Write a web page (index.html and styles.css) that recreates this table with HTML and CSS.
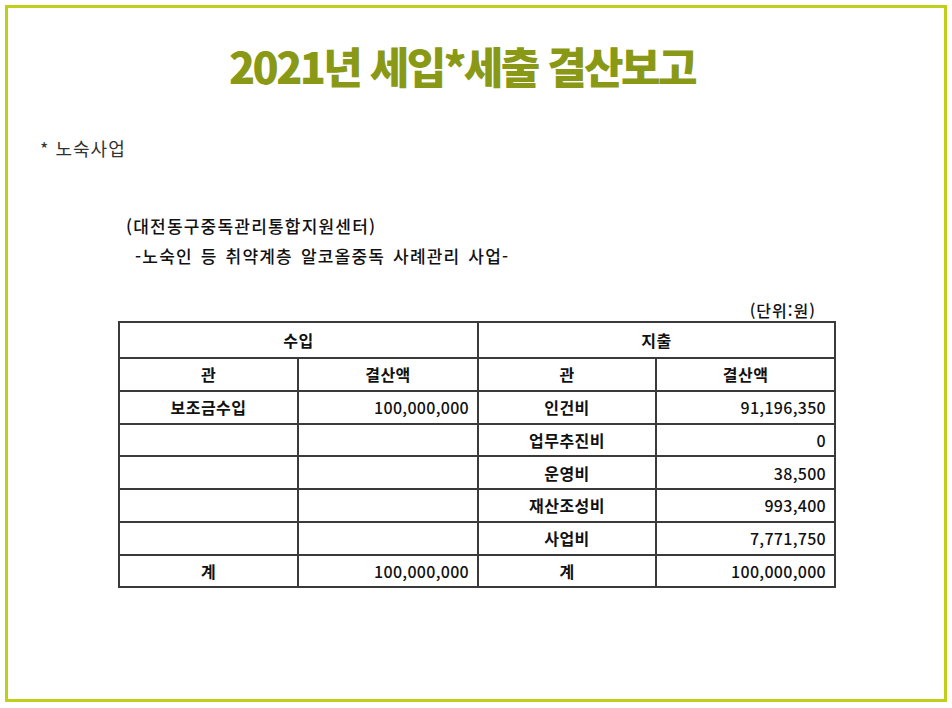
FILE: index.html
```html
<!DOCTYPE html>
<html lang="ko">
<head>
<meta charset="utf-8">
<title>2021년 세입*세출 결산보고</title>
<link rel="stylesheet" href="styles.css">
</head>
<body>
<div class="frame">
  <h1 class="title">2021년 세입*세출 결산보고</h1>
  <p class="note">* 노숙사업</p>
  <div class="org">
    <p class="org-name">(대전동구중독관리통합지원센터)</p>
    <p class="org-project">-노숙인 등 취약계층 알코올중독 사례관리 사업-</p>
  </div>
  <div class="report">
    <div class="unit">(단위:원)</div>
    <table class="ledger">
      <colgroup>
        <col class="c1"><col class="c2"><col class="c3"><col class="c4">
      </colgroup>
      <tr class="head">
        <th colspan="2">수입</th>
        <th colspan="2">지출</th>
      </tr>
      <tr>
        <th>관</th><th>결산액</th><th>관</th><th>결산액</th>
      </tr>
      <tr>
        <td class="name">보조금수입</td><td class="num">100,000,000</td>
        <td class="name">인건비</td><td class="num">91,196,350</td>
      </tr>
      <tr>
        <td></td><td></td>
        <td class="name">업무추진비</td><td class="num">0</td>
      </tr>
      <tr>
        <td></td><td></td>
        <td class="name">운영비</td><td class="num">38,500</td>
      </tr>
      <tr>
        <td></td><td></td>
        <td class="name">재산조성비</td><td class="num">993,400</td>
      </tr>
      <tr>
        <td></td><td></td>
        <td class="name">사업비</td><td class="num">7,771,750</td>
      </tr>
      <tr>
        <td class="name">계</td><td class="num">100,000,000</td>
        <td class="name">계</td><td class="num">100,000,000</td>
      </tr>
    </table>
  </div>
</div>
</body>
</html>
```

FILE: styles.css
```css
html, body {
  margin: 0;
  padding: 0;
  background: #ffffff;
}

body {
  font-family: "Noto Sans CJK KR", "Noto Sans", sans-serif;
  color: #222222;
}

.frame {
  box-sizing: border-box;
  margin: 5px;
  width: 942px;
  height: 697px;
  border: 3px solid #bfcf1a;
  padding: 0;
}

.title {
  margin: 32px 0 0 0;
  padding-right: 28px;
  text-align: center;
  font-size: 43px;
  line-height: 50px;
  font-weight: 900;
  letter-spacing: -2.6px;
  color: #8a9915;
}

.note {
  margin: 45px 0 0 32px;
  font-size: 18px;
  line-height: 26px;
  letter-spacing: 1px;
  color: #333333;
}

.org {
  margin: 50px 0 0 118px;
}

.org-name,
.org-project {
  margin: 0;
  font-size: 17px;
  line-height: 30px;
  font-weight: 500;
  letter-spacing: 1.2px;
  color: #111111;
}

.org-project {
  padding-left: 9px;
  word-spacing: 2px;
}

.report {
  margin: 29px 0 0 110px;
  width: 716px;
}

.unit {
  text-align: right;
  padding-right: 18px;
  font-size: 16px;
  line-height: 20px;
  font-weight: 500;
  letter-spacing: 1px;
  color: #111111;
}

.ledger {
  margin-top: 1px;
  width: 716px;
  table-layout: fixed;
  border-collapse: collapse;
  font-size: 16px;
  color: #111111;
}

.ledger .c1 { width: 179px; }
.ledger .c2 { width: 180px; }
.ledger .c3 { width: 178px; }
.ledger .c4 { width: 179px; }

.ledger th,
.ledger td {
  border: 2px solid #3a3a3a;
  padding: 0 8px;
  height: 30.75px;
  line-height: 20px;
  text-align: center;
  font-weight: 700;
  letter-spacing: 0.5px;
}

.ledger tr.head th {
  height: 34px;
}

.ledger td.num {
  text-align: right;
  font-weight: 500;
  letter-spacing: 0.3px;
}
```
